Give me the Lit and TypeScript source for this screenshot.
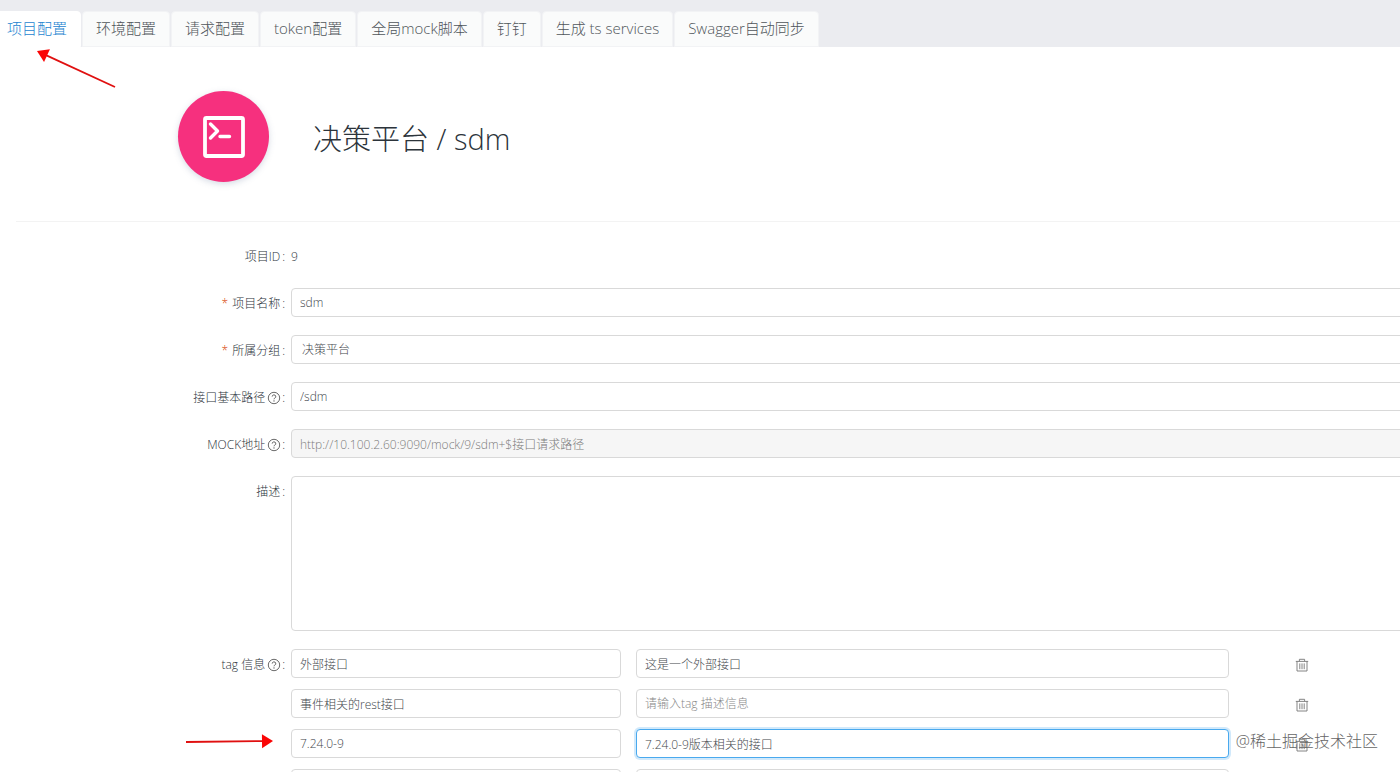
import { LitElement, html, css, svg } from "lit";
import { customElement, property } from "lit/decorators.js";

const tabs = [
  "项目配置",
  "环境配置",
  "请求配置",
  "token配置",
  "全局mock脚本",
  "钉钉",
  "生成 ts services",
  "Swagger自动同步",
];

interface Tag {
  name: string;
  desc: string;
  active?: boolean;
}

const tags: Tag[] = [
  { name: "外部接口", desc: "这是一个外部接口" },
  { name: "事件相关的rest接口", desc: "" },
  { name: "7.24.0-9", desc: "7.24.0-9版本相关的接口", active: true },
  { name: "", desc: "" },
];

const helpIcon = html`<svg class="help" viewBox="0 0 14 14" aria-hidden="true">
  <circle cx="7" cy="7" r="5.7" fill="none" stroke="currentColor" stroke-width="0.8" />
  <path d="M5.2 5.6a1.8 1.7 0 1 1 2.6 1.5c-.6.3-.8.6-.8 1.2" fill="none" stroke="currentColor" stroke-width="0.8" />
  <circle cx="7" cy="9.9" r="0.6" fill="currentColor" />
</svg>`;

const trashIcon = html`<svg class="trash" viewBox="0 0 14 14" aria-hidden="true">
  <path
    d="M0.8 3.4H13.2M4.4 3.2V1.3H9.6V3.2M2 3.4V13H12V3.4M4.8 5.4V11.2M7 5.4V11.2M9.2 5.4V11.2"
    fill="none"
    stroke="currentColor"
    stroke-width="0.9"
  />
</svg>`;

@customElement("project-tabs")
export class ProjectTabs extends LitElement {
  @property({ type: Number }) selected = 0;

  static styles = css`
    :host {
      display: block;
      background: #ebecf0;
      padding-top: 11px;
    }
    .bar {
      display: flex;
      gap: 1px;
      margin-left: -7px;
    }
    .tab {
      height: 36px;
      padding: 0 13px 2px;
      border: 1px solid #f2f3f5;
      border-radius: 4px 4px 0 0;
      background: #fafbfb;
      color: #4f555a;
      font: inherit;
      font-size: 15px;
      line-height: 32px;
      white-space: nowrap;
      cursor: pointer;
    }
    .selected {
      background: #fff;
      border-color: #fff;
      color: #1d84d0;
    }
  `;

  render() {
    return html`<div class="bar" role="tablist">
      ${tabs.map(
        (t, i) => html`<button
          class="tab ${i === this.selected ? "selected" : ""}"
          role="tab"
          aria-selected=${i === this.selected}
          @click=${() => (this.selected = i)}
        >${t}</button>`
      )}
    </div>`;
  }
}

@customElement("app-root")
export class AppRoot extends LitElement {
  static styles = css`
    :host {
      display: block;
      position: relative;
      height: 100vh;
      overflow: hidden;
      background: #fff;
      color: #2c343b;
      font-family: "Open Sans", "Noto Sans CJK SC", sans-serif;
      font-weight: 300;
      font-size: 12px;
      line-height: 18px;
    }
    .head {
      display: flex;
      align-items: center;
      gap: 44px;
      margin-left: 16px;
      padding: 44px 0 39px 162px;
      border-bottom: 1px solid #f3f3f3;
    }
    .logo {
      display: flex;
      align-items: center;
      justify-content: center;
      width: 91px;
      height: 91px;
      border-radius: 50%;
      background: #f6307e;
      box-shadow: 0 2px 6px rgba(90, 110, 150, 0.25);
    }
    .logo svg {
      width: 42px;
      height: 42px;
    }
    .title {
      margin: 0;
      padding-top: 4px;
      font-size: 29px;
      font-weight: 300;
      line-height: 44px;
    }
    .form {
      display: grid;
      gap: 18px;
      margin: 19px -40px 0 0;
    }
    .row {
      display: grid;
      grid-template-columns: 285px minmax(0, 1fr);
      column-gap: 6px;
      align-items: start;
    }
    .label {
      display: flex;
      justify-content: flex-end;
      align-items: center;
      box-sizing: border-box;
      height: 29px;
      padding-top: 2px;
      white-space: nowrap;
    }
    .star {
      margin-right: 4px;
      color: #d9460b;
    }
    .help {
      width: 14px;
      height: 14px;
      margin-left: 2px;
      color: #444;
    }
    .colon {
      margin-left: 2px;
    }
    .help + .colon {
      margin-left: 1px;
    }
    .value {
      line-height: 31px;
      height: 29px;
    }
    .field {
      display: block;
      box-sizing: border-box;
      width: 100%;
      height: 29px;
      margin: 0;
      padding: 0 8px;
      border: 1px solid #d9d9d9;
      border-radius: 4px;
      outline: none;
      background: #fff;
      color: #43474c;
      font: inherit;
      appearance: none;
    }
    .field::placeholder {
      color: #888;
      opacity: 1;
    }
    select.field {
      padding-left: 10px;
    }
    .field:disabled {
      background: #f6f6f6;
      color: #7c7c7c;
      opacity: 1;
    }
    .area {
      height: 155px;
      resize: none;
    }
    .active {
      border-color: #49a9ee;
      box-shadow: 0 0 0 2px rgba(73, 169, 238, 0.25);
    }
    .tags {
      display: grid;
      gap: 11px;
    }
    .tag {
      display: grid;
      grid-template-columns: 330fr 593fr 116fr 65fr;
      column-gap: 15px;
      align-items: center;
    }
    .remove {
      display: flex;
      justify-self: center;
      margin-top: 3px;
      padding: 0;
      border: 0;
      background: none;
      color: #777;
      cursor: pointer;
    }
    .trash {
      width: 14px;
      height: 14px;
    }
    .arrows {
      position: absolute;
      left: 0;
      top: 0;
      width: 300px;
      height: 772px;
      pointer-events: none;
    }
    .mark {
      position: absolute;
      right: 22px;
      top: 729px;
      color: #666;
      font-size: 16px;
      line-height: 24px;
      white-space: nowrap;
      pointer-events: none;
    }
  `;

  private label(text: string, id: string, opts: { required?: boolean; help?: boolean } = {}) {
    return html`<label class="label" for=${id}>
      ${opts.required ? html`<span class="star">*</span>` : ""}<span>${text}</span>${opts.help
        ? helpIcon
        : ""}<span class="colon">:</span>
    </label>`;
  }

  private arrow(x1: number, y1: number, x2: number, y2: number) {
    const length = Math.hypot(x2 - x1, y2 - y1);
    const angle = (Math.atan2(y2 - y1, x2 - x1) * 180) / Math.PI;
    return svg`<g transform="translate(${x2} ${y2}) rotate(${angle})">
      <path d="M${-length} 0H-8" stroke="#e01010" stroke-width="1.8" />
      <path d="M0 0L-11 -7V7Z" fill="#fa0505" />
    </g>`;
  }

  render() {
    return html`
      <project-tabs></project-tabs>
      <header class="head">
        <div class="logo">
          <svg viewBox="0 0 42 42" fill="none" stroke="#fff" aria-hidden="true">
            <rect x="2" y="2" width="38" height="38" rx="1.5" stroke-width="3.8" />
            <path d="M7.5 8L14.5 15L7.5 22M17 20.5H26.5" stroke-width="3.4" stroke-linecap="round" stroke-linejoin="round" />
          </svg>
        </div>
        <h1 class="title">决策平台 / sdm</h1>
      </header>
      <form class="form" @submit=${(e: Event) => e.preventDefault()}>
        <div class="row">
          <span class="label"><span>项目ID</span><span class="colon">:</span></span>
          <span class="value">9</span>
        </div>
        <div class="row">
          ${this.label("项目名称", "name", { required: true })}
          <input class="field" id="name" type="text" .value=${"sdm"} />
        </div>
        <div class="row">
          ${this.label("所属分组", "group", { required: true })}
          <select class="field" id="group">
            <option>决策平台</option>
          </select>
        </div>
        <div class="row">
          ${this.label("接口基本路径", "path", { help: true })}
          <input class="field" id="path" type="text" .value=${"/sdm"} />
        </div>
        <div class="row">
          ${this.label("MOCK地址", "mock", { help: true })}
          <input class="field" id="mock" type="text" disabled
            .value=${"http://10.100.2.60:9090/mock/9/sdm+$接口请求路径"} />
        </div>
        <div class="row">
          ${this.label("描述", "desc")}
          <textarea class="field area" id="desc"></textarea>
        </div>
        <div class="row">
          ${this.label("tag 信息", "tag-0", { help: true })}
          <div class="tags">
            ${tags.map(
              (t, i) => html`<div class="tag">
                <input class="field" id="tag-${i}" type="text" aria-label="tag" .value=${t.name} />
                <input class="field ${t.active ? "active" : ""}" type="text" aria-label="tag 描述信息"
                  placeholder="请输入tag 描述信息" .value=${t.desc} />
                <button class="remove" type="button" aria-label="删除">${trashIcon}</button>
              </div>`
            )}
          </div>
        </div>
      </form>
      <svg class="arrows" viewBox="0 0 300 772" aria-hidden="true">
        ${this.arrow(115, 87, 37, 51)} ${this.arrow(186, 742, 273, 741)}
      </svg>
      <div class="mark">@稀土掘金技术社区</div>
    `;
  }
}
